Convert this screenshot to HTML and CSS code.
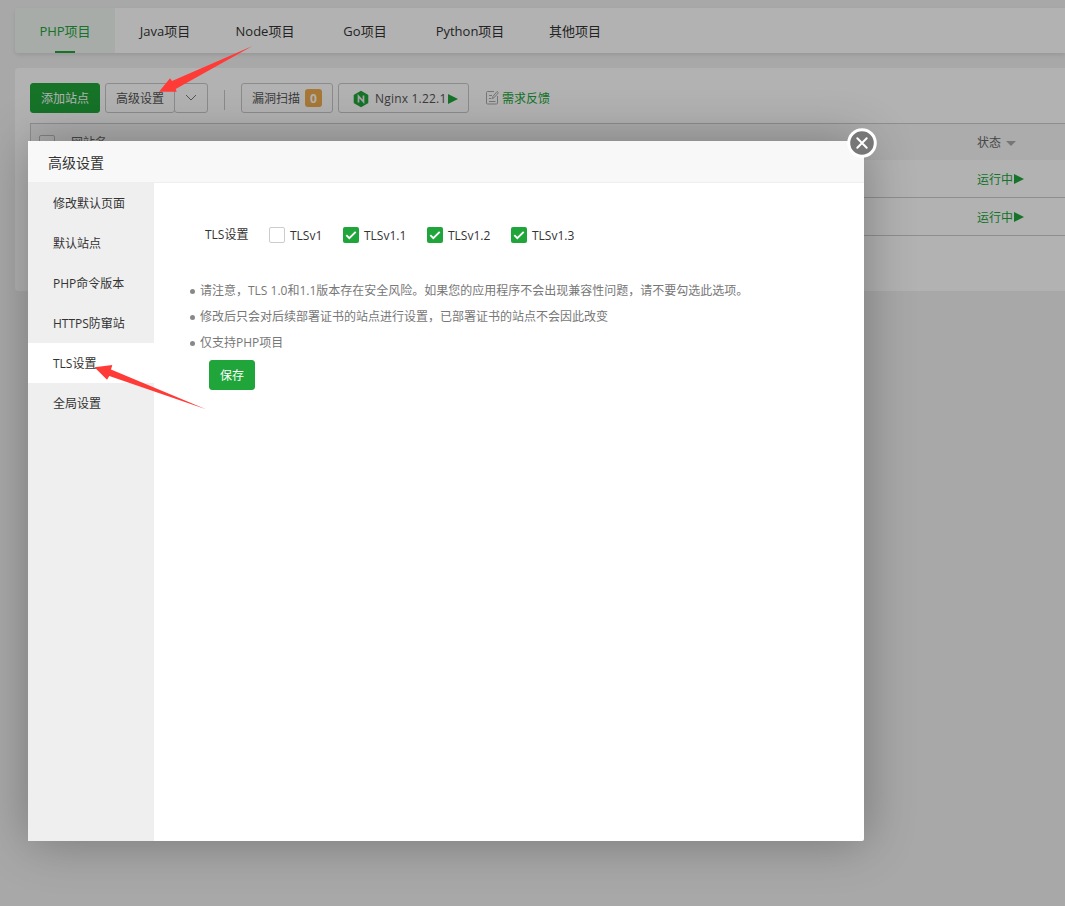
FILE: index.html
```html
<!DOCTYPE html>
<html lang="zh-CN">
<head>
<meta charset="utf-8">
<title>高级设置</title>
<link rel="stylesheet" href="styles.css">
</head>
<body>
<div class="page">
  <nav class="tabs">
    <a class="tab active">PHP项目</a>
    <a class="tab">Java项目</a>
    <a class="tab">Node项目</a>
    <a class="tab">Go项目</a>
    <a class="tab wide">Python项目</a>
    <a class="tab">其他项目</a>
  </nav>
  <section class="panel">
    <div class="toolbar">
      <button class="btn primary add">添加站点</button>
      <div class="group">
        <button class="btn adv">高级设置</button>
        <button class="btn drop"><svg width="12" height="8" viewBox="0 0 12 8"><path d="M1 1l5 5 5-5" fill="none" stroke="#777" stroke-width="1"/></svg></button>
      </div>
      <i class="divider"></i>
      <button class="btn scan">漏洞扫描<span class="count">0</span></button>
      <button class="btn nginx">
        <svg width="16" height="18" viewBox="0 0 16 18"><path d="M8 .8l6.600 3.700q.7.4.7 1.100v6.800q0 .7-.7 1.100L8 17.200l-6.600-3.700q-.7-.4-.7-1.100V5.600q0-.7.7-1.100z" fill="#20a53a"/><path d="M5.500 12.500V6.200l5 5.600V5.500" fill="none" stroke="#eee" stroke-width="1.700"/></svg>
        <span class="ver">Nginx 1.22.1</span><i class="play"></i>
      </button>
      <a class="feedback">
        <svg width="13" height="15" viewBox="0 0 13 15" fill="none" stroke="#aaa" stroke-width="1"><path d="M8 1.500H1.500q-1 0-1 1v10.500q0 1 1 1h9q1 0 1-1V6M3 5.500h3M3 8.500h2.500M3 11.500h6.500M6.500 8.500l.4-2L11 1.500l1.400 1.200-4.200 4.900z"/></svg>
        <span>需求反馈</span>
      </a>
    </div>
    <div class="table">
      <div class="row head"><i class="box"></i><span class="name">网站名</span><span class="state">状态<i class="sort"></i></span></div>
      <div class="row"><span class="state run">运行中<i class="play"></i></span></div>
      <div class="row"><span class="state run">运行中<i class="play"></i></span></div>
    </div>
  </section>
</div>
<div class="mask"></div>
<div class="modal">
  <header class="title">高级设置</header>
  <div class="body">
    <aside class="side">
      <a>修改默认页面</a>
      <a>默认站点</a>
      <a>PHP命令版本</a>
      <a>HTTPS防窜站</a>
      <a class="current">TLS设置</a>
      <a>全局设置</a>
    </aside>
    <main class="content">
      <div class="line">
        <span class="label">TLS设置</span>
        <label class="opt"><i class="check"></i><span>TLSv1</span></label>
        <label class="opt"><i class="check on"><svg viewBox="0 0 16 16"><path d="M3.300 8.200l3 3 6.400-6.400"/></svg></i><span>TLSv1.1</span></label>
        <label class="opt"><i class="check on"><svg viewBox="0 0 16 16"><path d="M3.300 8.200l3 3 6.400-6.400"/></svg></i><span>TLSv1.2</span></label>
        <label class="opt"><i class="check on"><svg viewBox="0 0 16 16"><path d="M3.300 8.200l3 3 6.400-6.400"/></svg></i><span>TLSv1.3</span></label>
      </div>
      <ul class="notes">
        <li>请注意，TLS 1.0和1.1版本存在安全风险。如果您的应用程序不会出现兼容性问题，请不要勾选此选项。</li>
        <li>修改后只会对后续部署证书的站点进行设置，已部署证书的站点不会因此改变</li>
        <li>仅支持PHP项目</li>
      </ul>
      <button class="btn primary save">保存</button>
    </main>
  </div>
  <button class="close"><svg width="30" height="30" viewBox="0 0 30 30"><circle cx="15" cy="15" r="13.300" fill="#777" stroke="#fff" stroke-width="3"/><path d="M10.300 10.300l9.400 9.400M19.700 10.300l-9.400 9.400" stroke="#fff" stroke-width="2" stroke-linecap="round"/></svg></button>
</div>
<svg class="arrows" width="1065" height="906" viewBox="0 0 1065 906" fill="#ff3b38"><path d="M159 91.700L170 78.300 172 81 252.500 46 175.700 89 176.700 91.700z"/><path d="M94.500 367.300L112.300 365 111 369.500 206 409.300 109.300 376 107 379.700z"/></svg>
</body>
</html>
```
FILE: styles.css
```css
* { box-sizing: border-box; }
body {
  margin: 0; width: 1065px; height: 906px; overflow: hidden; position: relative;
  background: #f1f1f1; color: #333;
  font: 12px/20px "Open Sans", "Noto Sans CJK SC", sans-serif;
  white-space: nowrap;
}
i { font-style: normal; display: block; }
button { font: inherit; padding: 0; margin: 0; cursor: pointer; }
.page { padding: 8px 0 0 15px; }
.tabs { display: flex; height: 45px; background: #fff; border-radius: 4px 0 0 4px; box-shadow: 0 2px 4px rgba(0,0,0,.1); }
.tab { width: 100px; height: 45px; line-height: 47px; font-size: 13px; text-align: center; }
.tab.wide { width: 110px; }
.tab.active { color: #20a53a; background: linear-gradient(#20a53a, #20a53a) center bottom / 20px 2px no-repeat #eff6f1; border-radius: 4px 0 0 4px; }
.panel { height: 223px; margin-top: 15px; padding: 15px 0 0 15px; background: #fff; border-radius: 4px 0 0 4px; }
.toolbar { display: flex; height: 30px; }
.btn { display: flex; align-items: center; justify-content: center; height: 30px; border: 1px solid #c8c8c8; border-radius: 3px; background: #fff; color: #555; line-height: 20px; }
.btn.primary { background: #20a53a; border-color: #20a53a; color: #fff; }
.btn.add, .btn.adv, .btn.save { padding-top: 2px; }
.add { width: 70px; }
.group { display: flex; margin-left: 5px; }
.adv { width: 70px; }
.drop { width: 34px; margin-left: -1px; }
.divider { width: 1px; height: 20px; margin: 7px 16px 0; background: #c8c8c8; }
.scan { width: 92px; gap: 5px; padding-top: 2px; }
.count { width: 17px; height: 18px; margin-top: -2px; line-height: 19px; border-radius: 3px; background: #f0ad4e; color: #fff; font-weight: 700; }
.nginx { width: 131px; margin-left: 5px; padding: 1px 0 0 14px; justify-content: flex-start; }
.ver { width: 73px; margin-left: 6px; padding-top: 1px; text-align: left; letter-spacing: .2px; }
.play { width: 0; height: 0; border: solid transparent; border-width: 5.500px 0 5.500px 10px; border-left-color: #20a53a; }
.feedback { display: flex; align-items: center; gap: 3px; margin-left: 17px; color: #20a53a; }
.feedback svg { margin-top: -1px; }
.feedback span { padding-top: 2px; }
.table { margin-top: 10px; border: solid #ccc; border-width: 1px 0 0 1px; }
.row { display: flex; align-items: center; height: 38px; padding-top: 2px; border-bottom: 1px solid #ccc; }
.row.head { height: 36px; border: 0; background: #f6f6f6; color: #666; }
.box { width: 16px; height: 16px; margin: -1px 0 0 8px; border: 1px solid #bbb; border-radius: 2px; }
.name { margin-left: 16px; width: 60px; }
.state { display: flex; align-items: center; margin-left: 946px; }
.head .state { margin-left: 846px; gap: 5px; }
.sort { border: solid transparent; border-width: 5.500px 5.500px 0; border-top-color: #aaa; }
.run { color: #20a53a; gap: 1px; }
.run .play { margin-top: -1px; }
.mask { position: absolute; inset: 0; background: rgba(0,0,0,.3); }
.modal { position: absolute; left: 28px; top: 141px; width: 836px; height: 700px; background: #fff; border-radius: 2px; box-shadow: 1px 1px 50px rgba(0,0,0,.3); }
.title { height: 42px; padding-left: 20px; line-height: 43px; font-size: 14px; background: #f8f8f8; border-bottom: 1px solid #eee; }
.body { display: flex; height: 658px; }
.side { width: 126px; background: #efefef; }
.side a { display: block; height: 40px; line-height: 42px; padding-left: 25px; }
.side .current { background: #fff; }
.content { flex: 1; padding: 42px 0 0 36px; }
.line { display: flex; align-items: center; height: 20px; }
.label { width: 64px; margin-left: 15px; }
.opt { display: flex; align-items: center; gap: 5px; width: 84px; }
.opt:nth-child(2) { width: 74px; }
.opt span { padding-top: 2px; }
.check { width: 16px; height: 16px; border: 1px solid #ccc; border-radius: 2px; }
.check.on { background: #20a53a; border: 0; }
.check svg { display: block; fill: none; stroke: #fff; stroke-width: 1.900; }
.notes { list-style: none; margin: 33px 0 0; padding: 0; color: #777; }
.notes li { display: flex; align-items: center; height: 26px; }
.notes li:last-child { height: 25px; }
.notes li::before { content: ""; width: 5px; height: 5px; margin: 1px 5px 0 0; border-radius: 50%; background: #888; }
.save { width: 46px; margin: 5px 0 0 19px; }
.close { position: absolute; left: 819px; top: -13px; width: 30px; height: 30px; border: 0; background: none; }
.close svg { display: block; }
.arrows { position: absolute; left: 0; top: 0; pointer-events: none; }
```
